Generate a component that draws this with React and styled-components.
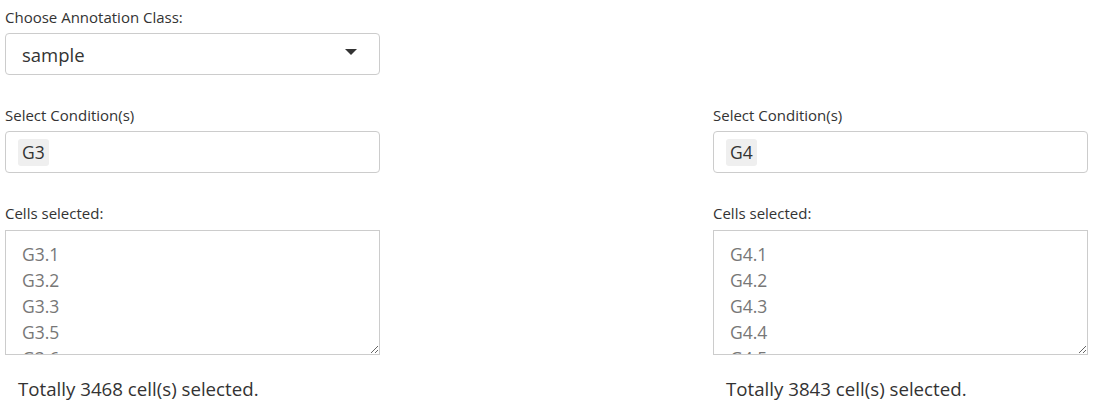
import React from "react";
import styled, { createGlobalStyle } from "styled-components";

const GlobalStyle = createGlobalStyle`
  body {
    margin: 0;
    background: #fff;
    font-family: "Open Sans", "Noto Sans", sans-serif;
    color: #333;
  }
`;

const Page = styled.div`
  padding: 8px 0 0 5px;
`;

const Columns = styled.div`
  display: grid;
  grid-template-columns: 375px 375px;
  column-gap: 333px;
`;

const Field = styled.div`
  width: 375px;
  margin-bottom: 31px;
`;

const FieldLabel = styled.label`
  display: block;
  font-size: 15px;
  line-height: 18px;
  margin-bottom: ${(props) => props.$gap || 7}px;
  color: #333;
`;

const SelectBox = styled.div`
  height: 42px;
  box-sizing: border-box;
  border: 1px solid #ccc;
  border-radius: 4px;
  display: flex;
  align-items: center;
  padding: 0 22px 0 16px;
  font-size: 18.5px;
  color: #333;
`;

const Caret = styled.span`
  margin-left: auto;
  width: 0;
  height: 0;
  border-left: 6px solid transparent;
  border-right: 6px solid transparent;
  border-top: 6px solid #333;
  margin-top: -4px;
`;

const TagBox = styled.div`
  height: 42px;
  box-sizing: border-box;
  border: 1px solid #ccc;
  border-radius: 4px;
  display: flex;
  align-items: center;
  padding: 0 12px;
`;

const Tag = styled.span`
  background: #efefef;
  border-radius: 3px;
  padding: 0 4px;
  line-height: 27px;
  font-size: 17.5px;
  color: #333;
`;

const CellList = styled.textarea`
  display: block;
  box-sizing: border-box;
  width: 375px;
  height: 125px;
  margin: 0;
  padding: 10px 15px 10px 16px;
  border: 1px solid #ccc;
  border-radius: 0;
  font-family: inherit;
  font-size: 17.5px;
  line-height: 26px;
  color: #777;
  overflow: hidden;
  resize: vertical;
  outline: none;
`;

const Total = styled.div`
  padding-left: 13px;
  margin-top: -9px;
  font-size: 18.7px;
  line-height: 24px;
  color: #333;
`;

const panels = [
  {
    tag: "G3",
    cells: ["G3.1", "G3.2", "G3.3", "G3.5", "G3.6", "G3.7", "G3.8"],
    total: 3468,
  },
  {
    tag: "G4",
    cells: ["G4.1", "G4.2", "G4.3", "G4.4", "G4.5", "G4.6", "G4.7"],
    total: 3843,
  },
];

const ConditionPanel = ({ tag, cells, total }) => (
  <div>
    <Field>
      <FieldLabel>Select Condition(s)</FieldLabel>
      <TagBox>
        <Tag>{tag}</Tag>
      </TagBox>
    </Field>
    <Field>
      <FieldLabel $gap={8}>Cells selected:</FieldLabel>
      <CellList readOnly value={cells.join("\n")} />
    </Field>
    <Total>Totally {total} cell(s) selected.</Total>
  </div>
);

const App = () => (
  <Page>
    <GlobalStyle />
    <Field>
      <FieldLabel>Choose Annotation Class:</FieldLabel>
      <SelectBox>
        sample
        <Caret />
      </SelectBox>
    </Field>
    <Columns>
      {panels.map((panel) => (
        <ConditionPanel key={panel.tag} {...panel} />
      ))}
    </Columns>
  </Page>
);

export default App;
